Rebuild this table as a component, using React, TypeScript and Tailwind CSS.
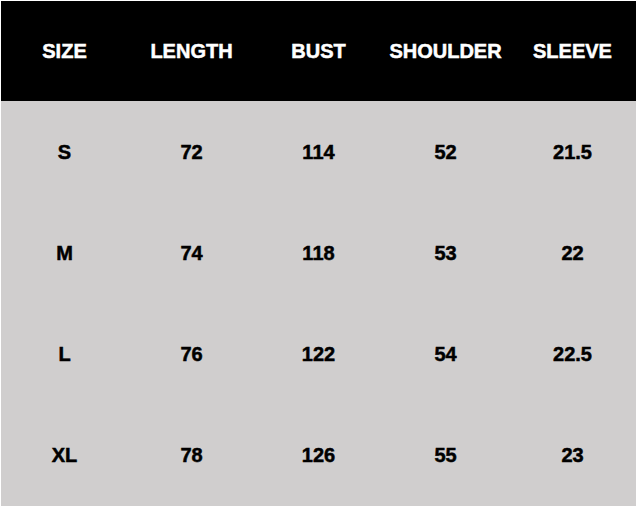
import React from "react";

const headers = ["SIZE", "LENGTH", "BUST", "SHOULDER", "SLEEVE"];
const rows = [
  ["S", "72", "114", "52", "21.5"],
  ["M", "74", "118", "53", "22"],
  ["L", "76", "122", "54", "22.5"],
  ["XL", "78", "126", "55", "23"],
];

export default function App() {
  return (
    <div
      className="w-[636px] h-[506px] flex flex-col border-t border-l border-white bg-[#d0cece] font-bold text-[20px] [-webkit-text-stroke:0.5px_currentcolor]"
      style={{ fontFamily: '"Liberation Sans", Arial, sans-serif' }}
    >
      <div className="h-[100px] grid grid-cols-5 bg-black text-white">
        {headers.map((h) => (
          <div key={h} className="flex items-center justify-center">
            {h}
          </div>
        ))}
      </div>
      {rows.map((r, i) => (
        <div key={i} className="flex-1 grid grid-cols-5 text-black">
          {r.map((c, j) => (
            <div key={j} className="flex items-center justify-center">
              {c}
            </div>
          ))}
        </div>
      ))}
    </div>
  );
}
